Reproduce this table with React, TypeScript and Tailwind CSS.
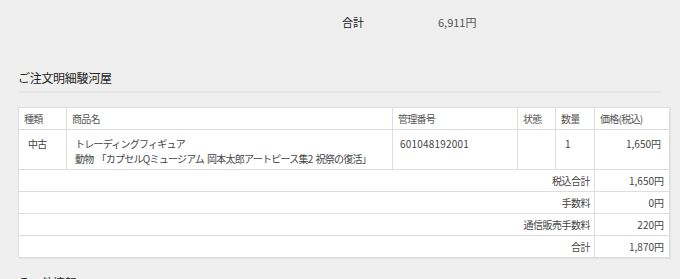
const summary = [
  { label: "税込合計", value: "1,650円" },
  { label: "手数料", value: "0円" },
  { label: "通信販売手数料", value: "220円" },
  { label: "合計", value: "1,870円" },
];

export default function App() {
  return (
    <div className="w-[680px] h-[279px] overflow-hidden bg-[#efefef] text-[#333] font-['Noto_Sans_CJK_JP','Noto_Sans',sans-serif]">
      <div className="flex items-center pt-[13px] pl-[342px] h-[31px]">
        <span className="w-[96px] text-[11px] text-[#222]">合計</span>
        <span className="text-[11px] text-[#555]">6,911円</span>
      </div>

      <div className="px-[18px] pt-[38px]">
        <h2 className="text-[12px] leading-[18px] tracking-[-0.3px] text-[#222] pb-[4px] border-b-2 border-[#e6e6e6]">
          ご注文明細駿河屋
        </h2>

        <table className="mt-[14px] w-[651px] table-fixed border-collapse bg-white text-[10px] text-[#444] shadow-[1px_1px_0_#e2e2e2]">
          <colgroup>
            <col className="w-[48px]" />
            <col className="w-[326px]" />
            <col className="w-[125px]" />
            <col className="w-[38px]" />
            <col className="w-[39px]" />
            <col className="w-[75px]" />
          </colgroup>
          <thead>
            <tr className="h-[22px] text-[#555] tracking-[-0.75px]">
              {["種類", "商品名", "管理番号", "状態", "数量", "価格(税込)"].map((h) => (
                <th key={h} className="border border-[#dedede] px-[5px] text-left font-normal">
                  {h}
                </th>
              ))}
            </tr>
          </thead>
          <tbody>
            <tr className="h-[40px] align-top leading-[15px]">
              <td className="border border-[#dedede] pl-[9px] pt-[6px] tracking-[-0.75px]">中古</td>
              <td className="border border-[#dedede] pl-[8px] pt-[6px] whitespace-nowrap tracking-[-0.75px]">
                <div>トレーディングフィギュア</div>
                <div>動物&nbsp; 「カプセルQミュージアム&nbsp; 岡本太郎アートピース集2&nbsp; 祝祭の復活」</div>
              </td>
              <td className="border border-[#dedede] pl-[7px] pt-[6px] tracking-[0.2px]">601048192001</td>
              <td className="border border-[#dedede]"></td>
              <td className="border border-[#dedede] pl-[9px] pt-[6px]">1</td>
              <td className="border border-[#dedede] pr-[8px] pt-[6px] text-right">1,650円</td>
            </tr>
            {summary.map((s) => (
              <tr key={s.label} className="h-[22px]">
                <td colSpan={5} className="border border-[#dedede] pr-[4px] text-right tracking-[-0.5px]">
                  {s.label}
                </td>
                <td className="border border-[#dedede] pr-[5px] text-right">{s.value}</td>
              </tr>
            ))}
          </tbody>
        </table>

        <h2 className="mt-[16px] text-[12px] leading-[18px] tracking-[-0.3px] text-[#222]">
          その他情報
        </h2>
      </div>
    </div>
  );
}
